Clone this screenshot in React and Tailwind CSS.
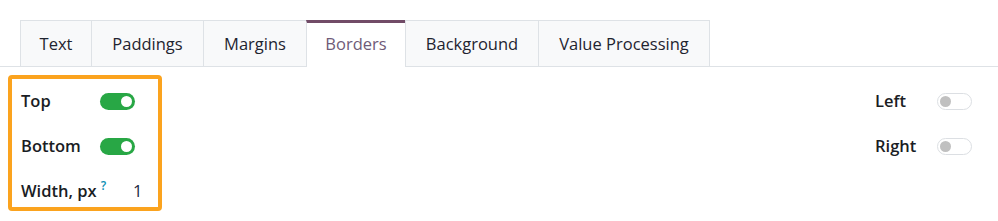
import React from "react";

const tabs = [
  ["Text", "w-[72px]"],
  ["Paddings", "w-[113px]"],
  ["Margins", "w-[104px]"],
  ["Borders", "w-[100px]"],
  ["Background", "w-[134px]"],
  ["Value Processing", "w-[172px]"],
];

function Toggle({ on }) {
  return on ? (
    <div className="w-[35px] h-[17px] rounded-full bg-[#28a745] flex items-center justify-end pr-[3px]">
      <div className="w-[11px] h-[11px] rounded-full bg-white" />
    </div>
  ) : (
    <div className="w-[35px] h-[17px] rounded-full bg-white border border-[#dcdfe3] flex items-center pl-[2px]">
      <div className="w-[11px] h-[11px] rounded-full bg-[#c0c0c0]" />
    </div>
  );
}

export default function App() {
  return (
    <div
      className="w-[998px] h-[221px] bg-white text-[#212529]"
      style={{ fontFamily: '"Open Sans", "Noto Sans", sans-serif' }}
    >
      <div className="pt-[20px]">
        <div className="flex border-b border-[#dee2e6] pl-[20px]">
          {tabs.map(([t, w]) => {
            const active = t === "Borders";
            return (
              <div
                key={t}
                className={
                  active
                    ? `${w} h-[47px] -mb-px -ml-px flex items-center justify-center text-[16.5px] bg-white border-x border-[#dee2e6] border-t-[3px] border-t-[#714b67] text-[#6f5b78] pb-[1px]`
                    : `${w} h-[47px] -mb-px -ml-px first:ml-0 flex items-center justify-center pt-[2px] text-[16.5px] bg-[#f8f9fa] border border-[#dee2e6] text-[#1f2430]`
                }
              >
                {t}
              </div>
            );
          })}
        </div>
      </div>
      <div className="flex justify-between mt-[8px] pl-[8px] pr-[26px]">
        <div className="w-[154px] h-[136px] border-[4px] border-[#fba31e] rounded-[4px] pl-[9px] pt-[11px] flex flex-col gap-[23px] font-semibold text-[16.5px] text-[#1a1d24]">
          <div className="h-[22px] flex items-center">
            <span className="w-[79px]">Top</span>
            <Toggle on />
          </div>
          <div className="h-[22px] flex items-center">
            <span className="w-[79px]">Bottom</span>
            <Toggle on />
          </div>
          <div className="h-[22px] flex items-center">
            <span className="w-[79px] whitespace-nowrap">
              Width, px
              <span className="text-[12px] text-[#0e8fb3] font-semibold ml-[4px] relative -top-[7px]">?</span>
            </span>
            <span className="ml-[33px] font-normal text-[#1c2a44]">1</span>
          </div>
        </div>
        <div className="pt-[15px] flex flex-col gap-[23px] font-semibold text-[16.5px] text-[#1a1d24]">
          <div className="h-[22px] flex items-center">
            <span className="w-[62px]">Left</span>
            <Toggle />
          </div>
          <div className="h-[22px] flex items-center">
            <span className="w-[62px]">Right</span>
            <Toggle />
          </div>
        </div>
      </div>
    </div>
  );
}
